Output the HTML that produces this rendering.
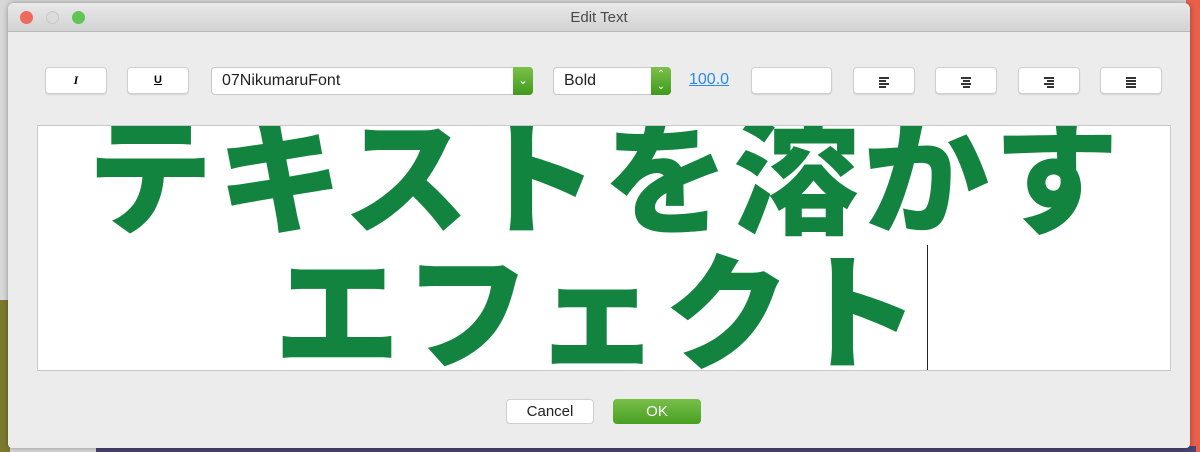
<!DOCTYPE html>
<html><head><style>
*{margin:0;padding:0;box-sizing:border-box}
body{width:1200px;height:452px;overflow:hidden;background:#d8d8d8;font-family:"Liberation Sans","Noto Sans CJK JP",sans-serif;position:relative}
.bgl{position:absolute;left:0;top:300px;width:10px;height:152px;background:#7d7a30}
.bgr{position:absolute;right:0;top:0;width:14px;height:452px;background:#e8604a}
.bgb{position:absolute;left:96px;top:446px;width:1100px;height:6px;background:#4a4470}
.win{position:absolute;left:8px;top:3px;width:1182px;height:445px;background:#ececec;border-radius:6px 6px 4px 4px;box-shadow:0 0 6px rgba(0,0,0,.35);overflow:hidden}
.title{height:29px;background:linear-gradient(#e8e8e8,#d3d3d3);border-bottom:1px solid #b9b9b9;text-align:center;font-size:15px;line-height:29px;color:#4a4a4a}
.dot{position:absolute;top:8px;width:13px;height:13px;border-radius:50%}
.btn{position:absolute;top:64px;height:27px;background:#fff;border:1px solid #cfcfcf;border-radius:4px;box-shadow:0 1px 1px rgba(0,0,0,.1)}
.sel{position:absolute;top:64px;height:28px;background:#fff;border:1px solid #c8c8c8;border-radius:4px;font-size:16px;line-height:26px;padding-left:10px;color:#222}
.gr{position:absolute;right:-1px;top:-1px;width:20px;height:28px;background:linear-gradient(#7cc04a,#3f9a1c);border-radius:0 4px 4px 0;color:#fff;font-size:12px;text-align:center;line-height:26px}
.al{position:absolute;left:50%;top:9px;width:10px;margin-left:-5px}
.al i{display:block;height:1.5px;background:#333;margin-bottom:1.5px}
.edit{position:absolute;left:29px;top:122px;width:1134px;height:246px;background:#fff;border:1px solid #c9c9c9;overflow:hidden}
.t{position:absolute;left:0;width:1134px;text-align:center;font-family:"Noto Sans CJK JP",sans-serif;font-weight:900;color:#13843f;white-space:nowrap;letter-spacing:4px}
</style></head><body>
<div class="bgl"></div><div class="bgr"></div><div class="bgb"></div>
<div class="win">
<div class="title">Edit Text</div>
<div class="dot" style="left:12px;background:#ed6a5e"></div>
<div class="dot" style="left:38px;background:#dcdcdc;border:1px solid #c8c8c8"></div>
<div class="dot" style="left:64px;background:#61c554"></div>
<div class="btn" style="left:37px;width:62px;text-align:center;font:italic bold 12px/25px 'Liberation Serif',serif">I</div>
<div class="btn" style="left:119px;width:62px;text-align:center;font:bold 11px/25px 'Liberation Sans',sans-serif;text-decoration:underline">U</div>
<div class="sel" style="left:203px;width:322px">07NikumaruFont<div class="gr">⌄</div></div>
<div class="sel" style="left:545px;width:118px">Bold<div class="gr" style="font-size:10px;line-height:12px;padding-top:2px">⌃<br>⌄</div></div>
<div style="position:absolute;left:681px;top:68px;font-size:16px;color:#2a8af0;text-decoration:underline">100.0</div>
<div class="btn" style="left:743px;width:81px"></div>
<div class="btn" style="left:845px;width:62px"><div class="al"><i style="width:10px"></i><i style="width:7px"></i><i style="width:10px"></i><i style="width:7px"></i></div></div>
<div class="btn" style="left:927px;width:62px"><div class="al"><i></i><i style="width:7px;margin-left:1.5px"></i><i></i><i style="width:7px;margin-left:1.5px"></i></div></div>
<div class="btn" style="left:1010px;width:62px"><div class="al"><i></i><i style="width:7px;margin-left:3px"></i><i></i><i style="width:7px;margin-left:3px"></i></div></div>
<div class="btn" style="left:1092px;width:62px"><div class="al"><i></i><i></i><i></i><i></i></div></div>
<div class="edit">
<div class="t" style="top:-46px;font-size:126px;line-height:180px">テキストを溶かす</div>
<div class="t" style="top:89px;font-size:126px;line-height:180px;left:-6px">エフェクト</div>
<div style="position:absolute;left:889px;top:119px;width:1px;height:128px;background:#222"></div>
</div>
<div style="position:absolute;left:498px;top:396px;width:88px;height:25px;background:#fff;border:1px solid #cfcfcf;border-radius:4px;text-align:center;font-size:15px;line-height:23px;color:#222">Cancel</div>
<div style="position:absolute;left:605px;top:396px;width:88px;height:25px;background:linear-gradient(#79bf4a,#489f22);border-radius:4px;text-align:center;font-size:15px;line-height:25px;color:#fff">OK</div>
</div>
</body></html>
